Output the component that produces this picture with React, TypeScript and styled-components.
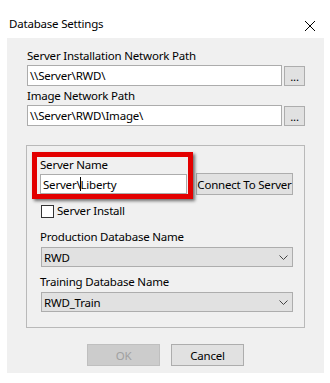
import React from "react";
import styled, { createGlobalStyle } from "styled-components";

const Global = createGlobalStyle`
  html, body { margin: 0; padding: 0; background: #ffffff; }
  body {
    font-family: "Noto Sans", "Open Sans", sans-serif;
    font-size: 11.5px;
    letter-spacing: -0.2px;
    line-height: 15px;
    color: #000000;
  }
  *, *::before, *::after { box-sizing: border-box; }
`;

const Window = styled.div`
  width: 330px;
  height: 383px;
  background: #ffffff;
  display: flex;
  flex-direction: column;
`;

const TitleBar = styled.div`
  height: 38px;
  display: flex;
  align-items: flex-start;
  justify-content: space-between;
  padding: 16px 15px 0 9px;
`;

const Title = styled.div`
  line-height: 15px;
`;

const CloseIcon = styled.svg`
  margin-top: 5px;
  display: block;
`;

const Body = styled.div`
  margin: 0 6px 0 7px;
  height: 335px;
  background: #f0f0f0;
  padding: 10px 19px 0 20px;
  display: flex;
  flex-direction: column;
`;

const Label = styled.div<{ $gap?: number; $top?: number }>`
  line-height: 15px;
  white-space: nowrap;
  margin-top: ${(p) => p.$top ?? 0}px;
  margin-bottom: ${(p) => p.$gap ?? 2}px;
`;

const PathRow = styled.div`
  display: flex;
  align-items: flex-end;
  height: 21px;
  margin-bottom: 2px;
`;

const TextBox = styled.div<{ $w: number; $h: number }>`
  width: ${(p) => p.$w}px;
  height: ${(p) => p.$h}px;
  background: #ffffff;
  border: 1px solid #acacac;
  padding: 0 2px;
  display: flex;
  align-items: center;
  white-space: nowrap;
  overflow: hidden;
`;

const Button = styled.div<{ $w: number; $h: number; $disabled?: boolean }>`
  width: ${(p) => p.$w}px;
  height: ${(p) => p.$h}px;
  background: ${(p) => (p.$disabled ? "#cccccc" : "#e1e1e1")};
  border: 1px solid ${(p) => (p.$disabled ? "#bfbfbf" : "#adadad")};
  color: ${(p) => (p.$disabled ? "#a0a0a0" : "#000000")};
  display: flex;
  align-items: center;
  justify-content: center;
  white-space: nowrap;
  flex: none;
`;

const BrowseButton = styled(Button)`
  margin-left: 2px;
  align-items: flex-end;
  padding-bottom: 2px;
  line-height: 12px;
`;

const Group = styled.div`
  margin-top: 17px;
  margin-left: -1px;
  width: 279px;
  height: 183px;
  border: 1px solid #b9b9b9;
  padding: 11px 0 0 13px;
  display: flex;
  flex-direction: column;
`;

const Highlight = styled.div`
  position: relative;
  &::after {
    content: "";
    position: absolute;
    left: -8px;
    top: -5px;
    width: 161px;
    height: 47px;
    border: 5px solid #e30000;
    box-shadow: 2px 2px 3px rgba(0, 0, 0, 0.55);
    pointer-events: none;
  }
`;

const ServerRow = styled.div`
  display: flex;
  align-items: center;
  height: 22px;
  margin-top: 1px;
`;

const Caret = styled.span`
  display: inline-block;
  width: 1px;
  height: 14px;
  background: #000000;
  margin: 0 0 0 -1px;
`;

const ConnectButton = styled(Button)`
  margin-left: 9px;
`;

const CheckRow = styled.div`
  display: flex;
  align-items: flex-start;
  margin: 10px 0 0 1px;
  height: 13px;
`;

const CheckBox = styled.div`
  width: 13px;
  height: 13px;
  border: 1px solid #333333;
  background: #ffffff;
  flex: none;
`;

const CheckLabel = styled.span`
  margin-left: 3px;
  margin-top: -2px;
  line-height: 15px;
`;

const Select = styled.div`
  margin-left: 1px;
  width: 252px;
  height: 20px;
  background: #e1e1e1;
  border: 1px solid #adadad;
  display: flex;
  align-items: center;
  justify-content: space-between;
  padding: 0 4px 0 2px;
`;

const Footer = styled.div`
  display: flex;
  justify-content: center;
  gap: 11px;
  margin-top: 16px;
  margin-left: -1px;
`;

const Chevron = () => (
  <svg width="9" height="5" viewBox="0 0 9 5">
    <path d="M0.5 0.5 L4.5 4.5 L8.5 0.5" fill="none" stroke="#444" strokeWidth="1" />
  </svg>
);

export default function App() {
  return (
    <>
      <Global />
      <Window>
        <TitleBar>
          <Title>Database Settings</Title>
          <CloseIcon width="10" height="10" viewBox="0 0 10 10">
            <path d="M0 0 L10 10 M10 0 L0 10" stroke="#000" strokeWidth="1" />
          </CloseIcon>
        </TitleBar>
        <Body>
          <Label>Server Installation Network Path</Label>
          <PathRow>
            <TextBox $w={255} $h={21}>\\Server\RWD\</TextBox>
            <BrowseButton $w={21} $h={20}>...</BrowseButton>
          </PathRow>
          <Label>Image Network Path</Label>
          <PathRow>
            <TextBox $w={255} $h={21}>\\Server\RWD\Image\</TextBox>
            <BrowseButton $w={21} $h={20}>...</BrowseButton>
          </PathRow>
          <Group>
            <Highlight>
              <Label $gap={0}>Server Name</Label>
              <ServerRow>
                <TextBox $w={147} $h={20}>
                  Server\<Caret />Liberty
                </TextBox>
                <ConnectButton $w={97} $h={22}>Connect To Server</ConnectButton>
              </ServerRow>
            </Highlight>
            <CheckRow>
              <CheckBox />
              <CheckLabel>Server Install</CheckLabel>
            </CheckRow>
            <Label $gap={3} $top={11}>Production Database Name</Label>
            <Select>
              <span>RWD</span>
              <Chevron />
            </Select>
            <Label $gap={3} $top={7}>Training Database Name</Label>
            <Select>
              <span>RWD_Train</span>
              <Chevron />
            </Select>
          </Group>
          <Footer>
            <Button $w={73} $h={22} $disabled>OK</Button>
            <Button $w={73} $h={22}>Cancel</Button>
          </Footer>
        </Body>
      </Window>
    </>
  );
}
